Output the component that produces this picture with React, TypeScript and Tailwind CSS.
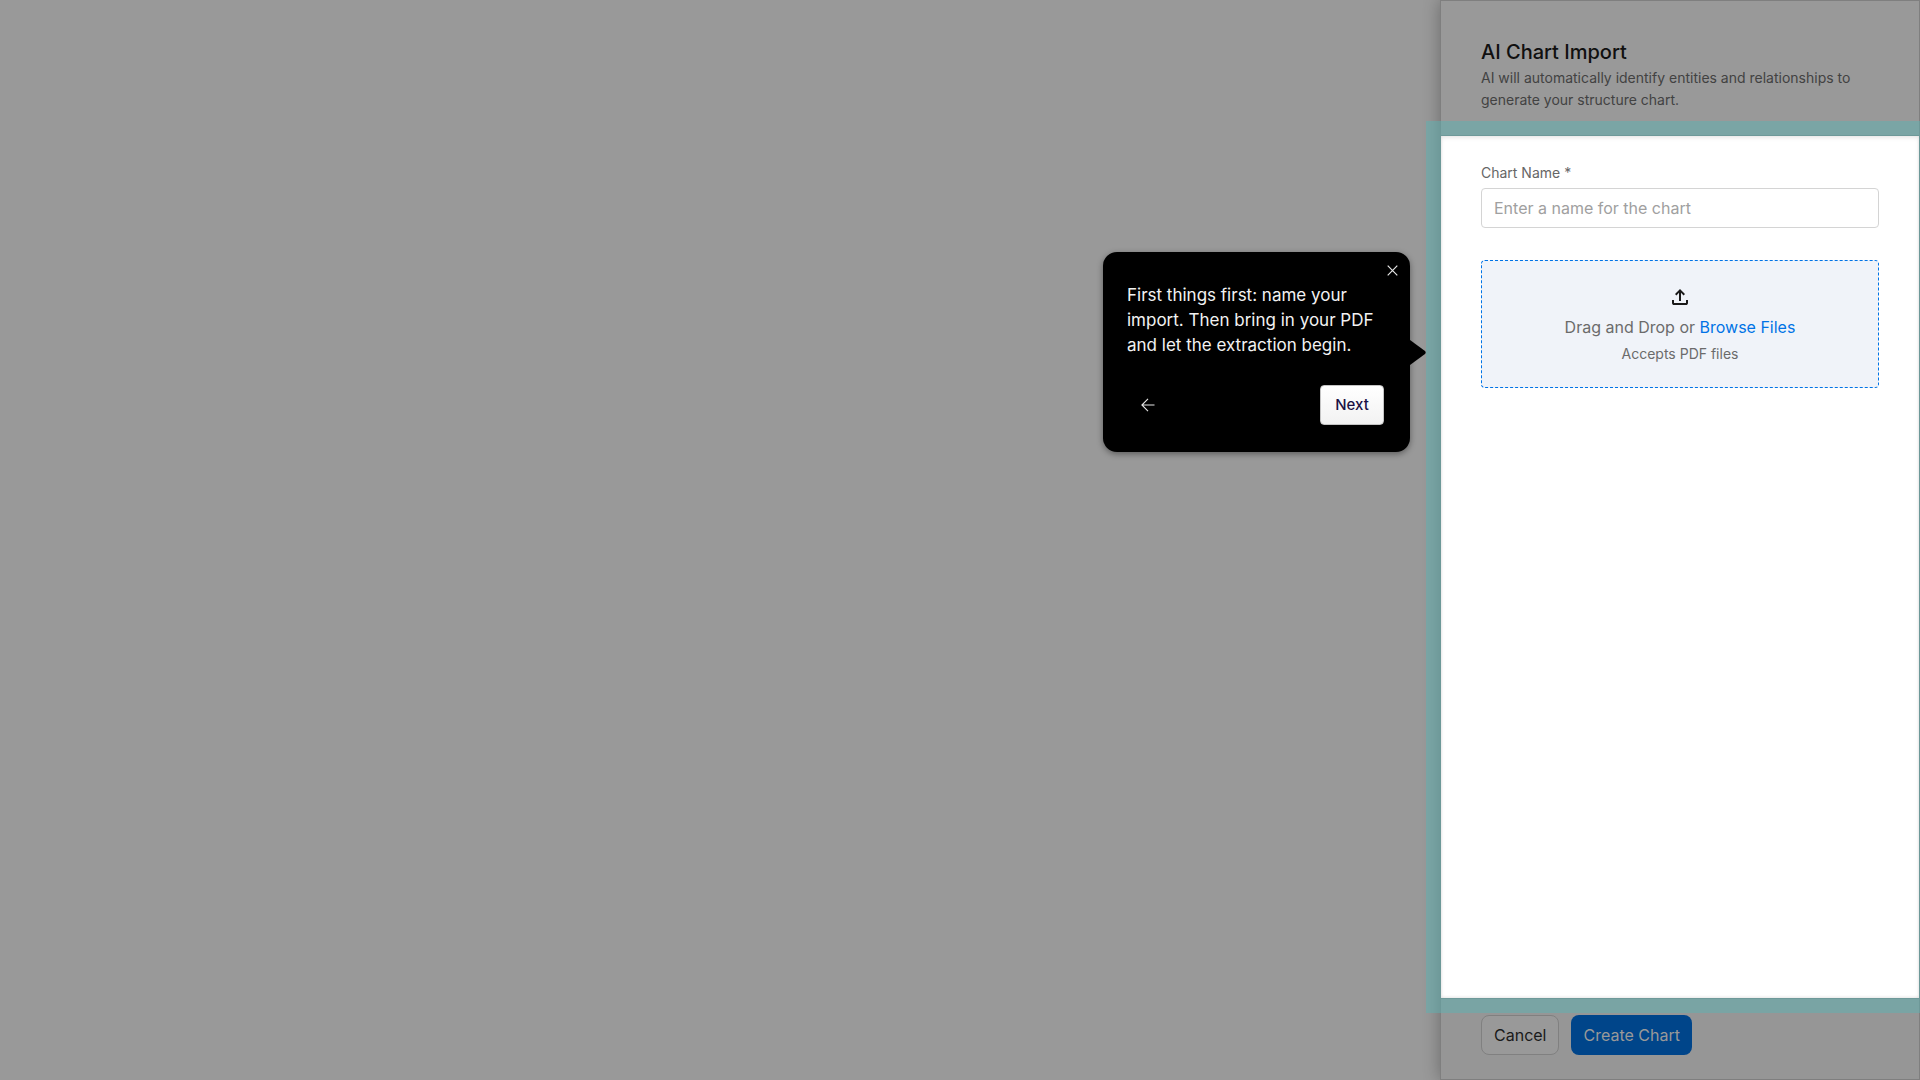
const TourPopover = () => {
  return (
    <div
      role="dialog"
      aria-label="Product tour"
      className="absolute z-20 right-[509px] top-[251px] w-[307px] h-[200px] rounded-[14px] bg-black px-6 pt-[31px] shadow-[0_2px_6px_rgba(0,0,0,0.4)]"
    >
      <button
        type="button"
        aria-label="Close"
        className="absolute right-3 top-[13px] text-[#e6e6e6]"
      >
        <svg width="11" height="11" viewBox="0 0 11 11" fill="none" stroke="currentColor" strokeWidth="1.2">
          <path d="M0.7 0.7 10.3 10.3M10.3 0.7 0.7 10.3" />
        </svg>
      </button>
      <p className="text-[17px] leading-[25px] text-[#f2f2f2]">
        First things first: name your import. Then bring in your PDF and let
        the extraction begin.
      </p>
      <div className="flex items-center justify-between mt-[27px] pl-3.5 pr-0.5">
        <button type="button" aria-label="Back" className="text-[#e6e6e6]">
          <svg width="14" height="14" viewBox="0 0 14 14" fill="none" stroke="currentColor" strokeWidth="1.1">
            <path d="M13.5 7H1M7 0.8 0.9 7 7 13.2" />
          </svg>
        </button>
        <button
          type="button"
          className="w-16 h-10 rounded border border-[#c4c4c4] bg-linear-to-b from-white to-[#f2f2f2] text-[15px] font-medium text-[#1b1145]"
        >
          Next
        </button>
      </div>
      <svg className="absolute left-full top-[88px]" width="16" height="25" viewBox="0 0 16 25">
        <path d="M0 0 15 11Q16.4 12.5 15 14L0 25Z" fill="#000" />
      </svg>
    </div>
  );
};

const UploadIcon = () => (
  <svg width="24" height="24" viewBox="0 0 24 24" fill="#1a1a1a">
    <path d="M11 16V7.85L8.4 10.45 7 9 12 4 17 9 15.6 10.45 13 7.85V16H11ZM6 20C5.45 20 4.98 19.8 4.59 19.41 4.2 19.02 4 18.55 4 18V15H6V18H18V15H20V18C20 18.55 19.8 19.02 19.41 19.41 19.02 19.8 18.55 20 18 20H6Z" />
  </svg>
);

const App = () => {
  return (
    <div className="flex h-screen overflow-hidden bg-[#999999] font-['Inter',sans-serif]">
      <main className="flex-1" />
      <aside className="relative flex flex-col w-[480px] shrink-0 border border-[#7f7f7f] bg-[#999999] shadow-[0_0_16px_rgba(0,0,0,0.3)]">
        <TourPopover />
        <header className="px-10 pt-9 pb-6 border-b border-[#808080]">
          <h1 className="text-[20px] leading-[30px] font-medium text-[#101010]">
            AI Chart Import
          </h1>
          <p className="text-sm leading-[22px] text-[#424242]">
            AI will automatically identify entities and relationships to
            generate your structure chart.
          </p>
        </header>

        <section className="relative z-10 flex-1 bg-white px-10 pt-[26px] shadow-[0_0_0_15px_rgba(91,177,177,0.5),inset_0_2px_4px_rgba(0,0,0,0.09),inset_0_-1px_3px_rgba(0,0,0,0.09)]">
          <label htmlFor="chart-name" className="block text-sm leading-[22px] text-[#666666]">
            Chart Name *
          </label>
          <input
            id="chart-name"
            type="text"
            placeholder="Enter a name for the chart"
            className="w-full h-10 mt-1 px-3 rounded border border-[#d4d4d4] text-base text-[#1a1a1a] placeholder:text-[#a0a0a0]"
          />
          <div className="flex flex-col items-center mt-8 pt-6 pb-[22px] rounded border border-dashed border-[#0073e6] bg-[#f0f3f9]">
            <UploadIcon />
            <p className="mt-1.5 text-base leading-6 text-[#6b6b6b]">
              Drag and Drop or{" "}
              <a href="#" className="text-[#0073e6]">
                Browse Files
              </a>
            </p>
            <p className="mt-1 text-sm leading-[22px] text-[#6b6b6b]">
              Accepts PDF files
            </p>
          </div>
        </section>

        <footer className="flex gap-3 px-10 pt-4 pb-6 border-t border-[#808080] bg-[#969696]">
          <button
            type="button"
            className="h-10 px-3 rounded-lg border border-[#808080] bg-[#999999] text-base text-[#1a1a1a]"
          >
            Cancel
          </button>
          <button
            type="button"
            className="h-10 px-3 rounded-lg bg-[#00458a] text-base text-[#999999]"
          >
            Create Chart
          </button>
        </footer>
      </aside>
    </div>
  );
};

export default App;
